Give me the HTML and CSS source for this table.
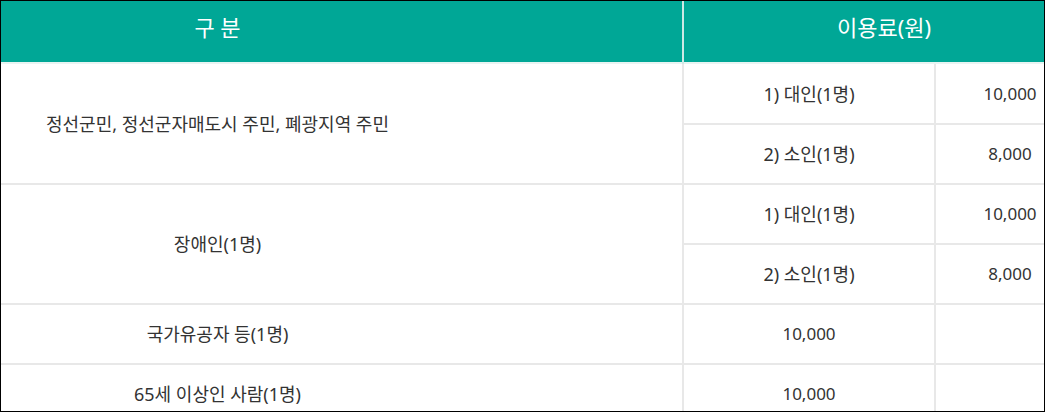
FILE: index.html
```html
<!DOCTYPE html>
<html lang="ko">
<head>
<meta charset="utf-8">
<link rel="stylesheet" href="styles.css">
</head>
<body>
<div class="frame">
  <table class="fee">
    <colgroup>
      <col class="c1">
      <col class="c2">
      <col class="c3">
    </colgroup>
    <thead>
      <tr>
        <th class="cat">구 분</th>
        <th colspan="2">이용료(원)</th>
      </tr>
    </thead>
    <tbody>
      <tr class="first">
        <td class="cat" rowspan="2">정선군민, 정선군자매도시 주민, 폐광지역 주민</td>
        <td>1) 대인(1명)</td>
        <td class="num">10,000</td>
      </tr>
      <tr>
        <td>2) 소인(1명)</td>
        <td class="num">8,000</td>
      </tr>
      <tr>
        <td class="cat" rowspan="2">장애인(1명)</td>
        <td>1) 대인(1명)</td>
        <td class="num">10,000</td>
      </tr>
      <tr>
        <td>2) 소인(1명)</td>
        <td class="num">8,000</td>
      </tr>
      <tr>
        <td class="cat">국가유공자 등(1명)</td>
        <td class="num">10,000</td>
        <td></td>
      </tr>
      <tr>
        <td class="cat">65세 이상인 사람(1명)</td>
        <td class="num">10,000</td>
        <td></td>
      </tr>
    </tbody>
  </table>
</div>
</body>
</html>
```

FILE: styles.css
```css
html, body {
  margin: 0;
  padding: 0;
  background: #fff;
}
.frame {
  box-sizing: border-box;
  width: 1045px;
  height: 412px;
  border: 1px solid #000;
  overflow: hidden;
  background: #fff;
}
.fee {
  border-collapse: collapse;
  table-layout: fixed;
  width: 1083px;
  font-family: "Noto Sans", "Noto Sans CJK KR", sans-serif;
  font-size: 18px;
  color: #333;
}
.c1 { width: 682px; }
.c2 { width: 252px; }
.c3 { width: 149px; }
.fee th {
  box-sizing: border-box;
  height: 62px;
  padding: 0 0 9px;
  background: #00a796;
  color: #fff;
  font-weight: 400;
  font-size: 22px;
  line-height: 26px;
  text-align: center;
  border-left: 2px solid #cde9e5;
}
.fee th:first-child {
  border-left: none;
}
.fee td {
  height: 58px;
  padding: 0;
  text-align: center;
  vertical-align: middle;
  border-top: 2px solid #e8e8e8;
  border-left: 2px solid #e8e8e8;
  line-height: 22px;
}
.fee td.num {
  font-size: 17px;
}
.fee tr.first td {
  height: 59px;
  border-top: 2px solid #e8f4f2;
}
.fee th.cat {
  padding-right: 248px;
}
.fee td.cat {
  padding-right: 248px;
  border-left: none;
}
```
